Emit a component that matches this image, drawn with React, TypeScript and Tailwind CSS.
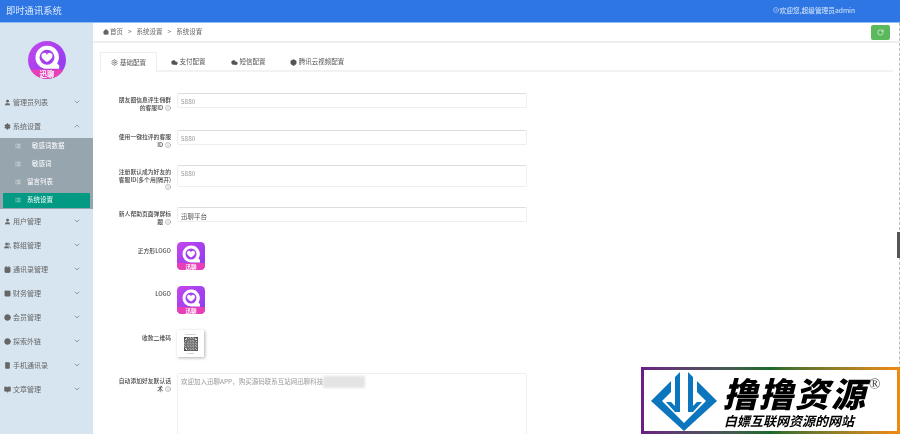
import { ChevronDown, ChevronUp, House, Settings, User, Users, Cloud, RotateCw, Info, Contact, SquareCheck, CircleDot, Compass, Smartphone, BookOpen, List, Box } from "lucide-react";

const font = "font-['Noto_Sans_CJK_SC','Liberation_Sans',sans-serif]";

function AppIcon({ round = false, size = 28 }: { round?: boolean; size?: number }) {
  return (
    <svg width={size} height={size} viewBox="0 0 56 56" className="block">
      <defs>
        <linearGradient id="appbg" x1="0" y1="0" x2="1" y2="1">
          <stop offset="0" stopColor="#c546ee" />
          <stop offset="1" stopColor="#8a3bf0" />
        </linearGradient>
        <clipPath id={round ? "clipr" : "clips"}>
          {round ? <circle cx="28" cy="28" r="28" /> : <rect width="56" height="56" rx="9" />}
        </clipPath>
      </defs>
      <g clipPath={round ? "url(#clipr)" : "url(#clips)"}>
        <rect width="56" height="56" fill="url(#appbg)" />
        <rect y="42" width="56" height="14" fill="#e93fb6" />
        <path d="M28 7a17 17 0 1 0 0 34h18v-5l-3-3a17 17 0 0 0-15-26z" fill="#fff" />
        <circle cx="28" cy="24" r="11" fill="#a53fef" />
        <path d="M28 31c-6-4-8-6-8-9a4 4 0 0 1 8-1 4 4 0 0 1 8 1c0 3-2 5-8 9z" fill="#fff" />
        <text x="28" y="53" textAnchor="middle" fontSize="11" fontWeight="700" fill="#fff" fontFamily="Noto Sans CJK SC">迅聊</text>
      </g>
    </svg>
  );
}

function Qr() {
  const n = 15;
  const cells: React.ReactNode[] = [];
  for (let y = 0; y < n; y++) {
    for (let x = 0; x < n; x++) {
      const corner = (x < 4 && y < 4) || (x > 10 && y < 4) || (x < 4 && y > 10);
      if (corner ? (x === 0 || y === 0 || x === 3 || y === 3 || x === 11 || y === 11 || x === 14 || y === 14 || (x % 3 === 1 && y % 3 === 1)) : (x * 7 + y * 13 + x * y) % 3 !== 0) {
        cells.push(<rect key={x + "-" + y} x={x} y={y} width="1" height="1" fill="#333" />);
      }
    }
  }
  return (
    <div className="flex h-[27px] w-[27px] flex-col items-center justify-center bg-white shadow-[1px_1px_3px_rgba(0,0,0,0.3)]">
      <div className="mb-[2px] h-px w-[11px] bg-gray-300" />
      <svg width="14" height="14" viewBox="0 0 15 15">{cells}</svg>
      <div className="mt-[2px] h-px w-[7px] bg-gray-300" />
    </div>
  );
}

function MenuRow({ icon: Icon, label, open }: { icon: typeof User; label: string; open?: boolean }) {
  return (
    <div className="flex h-6 items-center pl-1 pr-[12px] text-[7px] text-[#666]">
      <Icon size={7} className="mr-[2px] shrink-0" fill="currentColor" />
      <span className="flex-1">{label}</span>
      {open ? <ChevronUp size={8} className="text-[#777]" /> : <ChevronDown size={8} className="text-[#777]" />}
    </div>
  );
}

function SubRow({ label, active, center }: { label: string; active?: boolean; center?: boolean }) {
  return (
    <div className={"mx-[3px] my-[1.5px] flex h-[15px] shrink-0 items-center pl-3 text-[6.5px] text-white " + (active ? "bg-[#039a84] rounded-[1px]" : "")}>
      <List size={6} className="mr-[6px] shrink-0" />
      <span className={center ? "pl-[5px]" : ""}>{label}</span>
    </div>
  );
}

function Label({ text, tip, className = "" }: { text: string; tip?: boolean; className?: string }) {
  return (
    <div className={"w-[57px] shrink-0 text-right text-[5.8px] font-medium leading-[7.5px] text-[#444] " + className}>
      {text}
      {tip && <Info size={6} className="ml-[2px] inline-block align-[-1px] text-[#888]" />}
    </div>
  );
}

function Field({ label, value, row, h, dark }: { label: string; value: string; row: string; h: string; dark?: boolean }) {
  return (
    <div className={"flex gap-[6px] " + row}>
      <Label text={label} tip className="pt-[3px]" />
      <div className={"w-[350px] rounded-[2px] border border-[#eee] border-t-[#ddd] pl-[3px] pt-[2px] text-[6.5px] leading-[10px] " + h + " " + (dark ? "text-[#555] pt-[3px]" : "text-[#999]")}>
        {value}
      </div>
    </div>
  );
}

function Tab({ icon: Icon, label, active, w }: { icon: typeof User; label: string; active?: boolean; w: string }) {
  return (
    <div className={"flex h-[20px] items-center justify-center gap-[2px] text-[6.5px] text-[#555] " + w + " " + (active ? "border-x border-t border-[#eee] bg-white -mb-px" : "")}>
      <Icon size={7} fill={active ? "none" : "currentColor"} />
      {label}
    </div>
  );
}

export default function App() {
  return (
    <div className={"relative flex h-[434px] w-[900px] flex-col overflow-hidden bg-white blur-[0.4px] " + font}>
      {/* Header */}
      <header className="flex h-[23px] shrink-0 items-center justify-between border-b border-[#8dbcf3] bg-[#2e76e3] pl-[6px] pr-[45px] text-white">
        <div className="text-[9.3px] text-[#dce9fb]">即时通讯系统</div>
        <div className="flex items-center gap-px pb-[2px] text-[6.7px] text-[#dce9fb]">
          <CircleDot size={6} />
          欢迎您,超级管理员admin
        </div>
      </header>

      <div className="flex min-h-0 flex-1">
        {/* Sidebar */}
        <aside className="w-[93px] shrink-0 bg-[#d6e5f0]">
          <div className="flex h-[67px] items-start justify-center pt-[18px]">
            <AppIcon round size={38} />
          </div>
          <MenuRow icon={User} label="管理员列表" />
          <MenuRow icon={Settings} label="系统设置" open />
          <div className="flex h-[71px] flex-col justify-end bg-[#96a5ae]">
            <SubRow label="敏感词数据" center />
            <SubRow label="敏感词" center />
            <SubRow label="留言列表" />
            <SubRow label="系统设置" active />
          </div>
          <MenuRow icon={User} label="用户管理" />
          <MenuRow icon={Users} label="群组管理" />
          <MenuRow icon={Contact} label="通讯录管理" />
          <MenuRow icon={SquareCheck} label="财务管理" />
          <MenuRow icon={CircleDot} label="会员管理" />
          <MenuRow icon={Compass} label="探索外链" />
          <MenuRow icon={Smartphone} label="手机通讯录" />
          <MenuRow icon={BookOpen} label="文章管理" />
        </aside>

        {/* Main */}
        <main className="flex min-w-0 flex-1 flex-col border-r border-dashed border-[#bbb]">
          <div className="flex h-[20px] shrink-0 items-center justify-between border-b-2 border-[#eee] pl-[10px] pr-[9px]">
            <div className="flex items-center gap-[5px] text-[6.5px] text-[#666]">
              <span className="flex items-center gap-px">
                <House size={6} fill="currentColor" />
                首页
              </span>
              <span>&gt;</span>
              <span>系统设置</span>
              <span>&gt;</span>
              <span>系统设置</span>
            </div>
            <div className="flex h-[15px] w-[19px] items-center justify-center rounded-[2px] bg-[#5cb85c] text-white">
              <RotateCw size={7} />
            </div>
          </div>

          <div className="min-h-0 flex-1 pl-[7px] pr-[6px] pt-[9px]">
            <div className="flex h-[20px] border-b-2 border-[#f2f2f2] text-[#555]">
              <Tab icon={Settings} label="基础配置" active w="w-[57px]" />
              <Tab icon={Cloud} label="支付配置" w="w-[62px]" />
              <Tab icon={Cloud} label="短信配置" w="w-[58px]" />
              <Tab icon={Box} label="腾讯云视频配置" w="w-[80px]" />
            </div>

            <div className="pl-[14px] pt-[21px]">
              <Field label="朋友圈信息评生佣群的客服ID" value="5880" row="h-[37px]" h="h-[15px]" />
              <Field label="使用一键拉评的客服ID" value="5880" row="h-[35px]" h="h-[15px]" />
              <Field label="注册默认成为好友的客服ID(多个用|隔开)" value="5880" row="h-[42px]" h="h-[22px]" />
              <Field label="新人帮助页面弹屏标题" value="迅聊平台" row="h-[35px]" h="h-[15px]" dark />

              <div className="flex h-[44px] gap-[6px]">
                <Label text="正方形LOGO" className="pt-[5px]" />
                <AppIcon />
              </div>
              <div className="flex h-[44px] gap-[6px]">
                <Label text="LOGO" className="pt-[4px]" />
                <AppIcon />
              </div>
              <div className="flex h-[43px] gap-[6px]">
                <Label text="收款二维码" className="pt-[4px]" />
                <Qr />
              </div>
              <div className="flex gap-[6px]">
                <Label text="自动添加好友默认话术" tip className="pt-[4px]" />
                <div className="flex h-[62px] w-[350px] items-start rounded-[2px] border border-[#eee] pl-[3px] pt-[2px] text-[6.5px] leading-[10px] text-[#999]">
                  欢迎加入迅聊APP，购买源码联系互站网迅聊科技
                  <div className="h-[12px] w-[42px] bg-[#e4e4e4] blur-[1px]" />
                </div>
              </div>
            </div>
          </div>
        </main>
      </div>

      {/* scrollbar thumb */}
      <div className="absolute right-0 top-[232px] h-[26px] w-[3px] bg-[#555]" />

      {/* Watermark */}
      <div className="absolute bottom-0 right-0 h-[67px] w-[259px] bg-gradient-to-r from-[#6b1d83] via-[#176a2c] to-[#f08a12] p-[3px]">
        <div className="flex h-full items-center bg-white pl-[7px]">
          <svg width="66" height="60" viewBox="0 0 66 60" className="shrink-0">
            <path d="M0 30L20 10V21L11 30L33 52L55 30L46 21V10L66 30L33 60z" fill="#0b76bd" />
            <path d="M29 1L24 6V35L20 31H15L24 41H29z" fill="#0b76bd" />
            <path d="M37 1L42 6V35L46 31H51L42 41H37z" fill="#0b76bd" />
          </svg>
          <div className="ml-[6px] flex flex-col">
            <div className="flex items-start">
              <span className="text-[34px] font-black italic leading-[38px] tracking-[2px] text-black">撸撸资源</span>
              <span className="ml-[2px] font-['Liberation_Serif',serif] text-[15px] leading-[20px] text-[#444]">®</span>
            </div>
            <span className="mt-[2px] pl-[1px] text-[13px] font-bold italic leading-[14px] text-black">白嫖互联网资源的网站</span>
          </div>
        </div>
      </div>
    </div>
  );
}
